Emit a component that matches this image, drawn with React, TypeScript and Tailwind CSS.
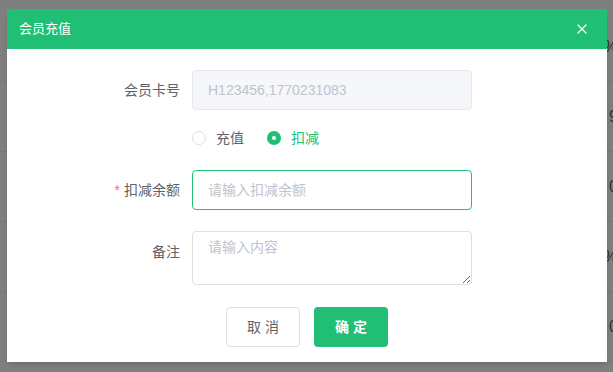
import React, { useState } from 'react';
import { X } from 'lucide-react';

const font = { fontFamily: '"Liberation Sans", "Noto Sans CJK SC", sans-serif' };

// faint table sitting under the modal overlay
const bgRows = ['%', '9', '0', '%', '0'];

export default function App() {
  const [mode, setMode] = useState<'add' | 'deduct'>('deduct');

  return (
    <div className="relative w-[613px] h-[372px] overflow-hidden bg-white" style={font}>
      {/* page behind */}
      <div className="flex flex-col pt-[12px]">
        {bgRows.map((c, i) => (
          <div key={i} className="h-[70px] flex items-center justify-end border-b border-[#ebeef5] text-[16px] text-[#606266]">
            <span className="-mr-[5px]">{c}</span>
          </div>
        ))}
      </div>

      {/* overlay */}
      <div className="absolute inset-0 bg-black/50" />

      {/* dialog */}
      <div className="absolute left-[7px] top-[9px] w-[600px] h-[353px] bg-white flex flex-col shadow-md">
        <div className="h-[40px] bg-[#20bf75] flex items-center justify-between pl-[12px] pr-[17px] text-white">
          <span className="text-[13px]">会员充值</span>
          <X className="w-[16px] h-[16px]" strokeWidth={1.8} />
        </div>

        <div className="flex flex-col pt-[21px]">
          <div className="flex items-center h-[40px]">
            <label className="w-[185px] pr-[12px] text-right text-[14px] text-[#606266]">会员卡号</label>
            <div className="w-[280px] h-[40px] rounded-[4px] border border-[#e4e7ed] bg-[#f5f7fa] px-[15px] flex items-center text-[14px] text-[#c0c4cc]">
              H123456,1770231083
            </div>
          </div>

          <div className="flex items-center h-[40px] mt-[8px] pl-[185px] text-[14px]">
            <button onClick={() => setMode('add')} className="flex items-center mr-[23px]">
              <span className={mode === 'add' ? 'w-[14px] h-[14px] rounded-full bg-[#20bf75] flex items-center justify-center' : 'w-[14px] h-[14px] rounded-full border border-[#dcdfe6] bg-white'}>
                {mode === 'add' && <span className="w-[4px] h-[4px] rounded-full bg-white" />}
              </span>
              <span className={mode === 'add' ? 'pl-[10px] text-[#20bf75]' : 'pl-[10px] text-[#606266]'}>充值</span>
            </button>
            <button onClick={() => setMode('deduct')} className="flex items-center">
              <span className={mode === 'deduct' ? 'w-[14px] h-[14px] rounded-full bg-[#20bf75] flex items-center justify-center' : 'w-[14px] h-[14px] rounded-full border border-[#dcdfe6] bg-white'}>
                {mode === 'deduct' && <span className="w-[4px] h-[4px] rounded-full bg-white" />}
              </span>
              <span className={mode === 'deduct' ? 'pl-[10px] text-[#20bf75]' : 'pl-[10px] text-[#606266]'}>扣减</span>
            </button>
          </div>

          <div className="flex items-center h-[40px] mt-[12px]">
            <label className="w-[185px] pr-[12px] text-right text-[14px] text-[#606266]">
              <span className="text-[#f56c6c] mr-[4px]">*</span>扣减余额
            </label>
            <input
              autoFocus
              placeholder="请输入扣减余额"
              className="w-[280px] h-[40px] rounded-[4px] border border-[#20bf75] px-[15px] text-[14px] text-[#606266] placeholder-[#c0c4cc] outline-none"
              style={font}
            />
          </div>

          <div className="flex items-start mt-[21px]">
            <label className="w-[185px] pr-[12px] text-right text-[14px] text-[#606266] pt-[11px]">备注</label>
            <textarea
              placeholder="请输入内容"
              className="w-[280px] h-[54px] rounded-[4px] border border-[#dcdfe6] px-[15px] py-[5px] text-[14px] text-[#606266] placeholder-[#c0c4cc] outline-none resize-y"
              style={font}
            />
          </div>

          <div className="flex justify-center gap-[14px] mt-[22px]">
            <button className="w-[74px] h-[40px] rounded-[4px] border border-[#dcdfe6] bg-white text-[14px] text-[#606266]">取 消</button>
            <button className="w-[74px] h-[40px] rounded-[4px] bg-[#20bf75] text-[14px] text-white font-bold">确 定</button>
          </div>
        </div>
      </div>
    </div>
  );
}
